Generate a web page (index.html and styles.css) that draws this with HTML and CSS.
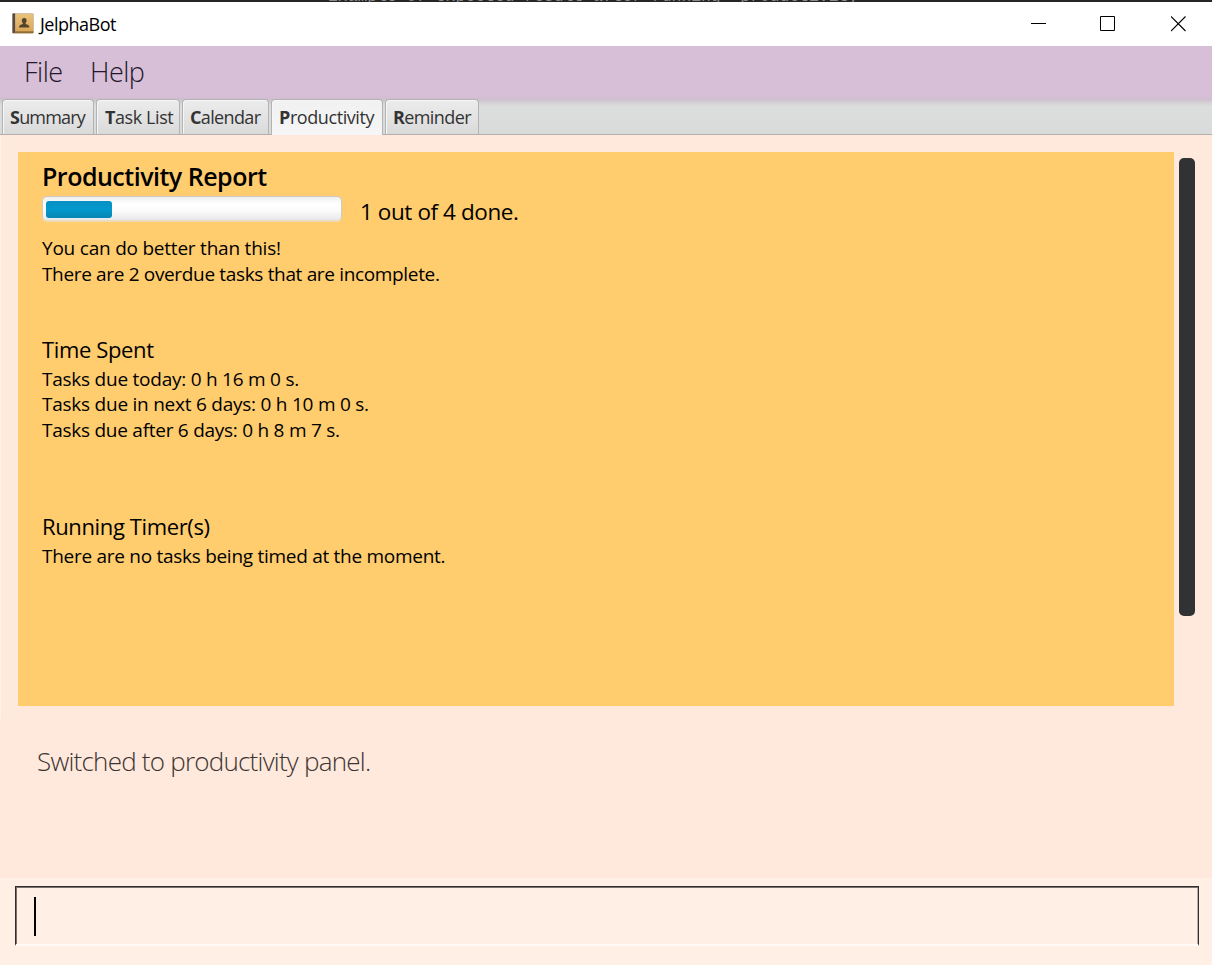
FILE: index.html
```html
<!DOCTYPE html>
<html lang="en">
<head>
<meta charset="utf-8">
<title>JelphaBot</title>
<link rel="stylesheet" href="styles.css">
</head>
<body>
<div class="window">
  <div class="backdrop"><span class="backdrop-text">Example of expected result after running `productivity`</span></div>
  <header class="titlebar">
    <svg class="app-icon" width="22" height="21" viewBox="0 0 22 21">
      <defs><linearGradient id="book" x1="0" y1="0" x2="0" y2="1"><stop offset="0" stop-color="#e8c27c"/><stop offset="1" stop-color="#dba757"/></linearGradient></defs>
      <rect x="0.5" y="0.5" width="21" height="20" rx="1" fill="#a8844f"/>
      <rect x="3" y="1" width="18" height="17.500" fill="url(#book)"/>
      <rect x="0.5" y="0.5" width="2.6" height="19.5" fill="#55494a"/>
      <rect x="2" y="18.5" width="19.5" height="1.2" fill="#86662f"/>
      <path d="M12.200 5c1.600 0 2.400 1.100 2.400 2.500 0 1.200-.5 2-1 2.500v1c1.800.7 3.800 1 3.800 3.500H7c0-2.500 2-2.800 3.800-3.500v-1c-.5-.5-1-1.300-1-2.500C9.800 6.100 10.600 5 12.200 5z" fill="#54442d"/>
    </svg>
    <span class="app-name">JelphaBot</span>
    <div class="controls">
      <svg width="16" height="16" viewBox="0 0 16 16"><path d="M0 7.500h15" stroke="#000" fill="none"/></svg>
      <svg width="16" height="16" viewBox="0 0 16 16"><path d="M.5.5h14v14H.5z" stroke="#000" fill="none"/></svg>
      <svg width="16" height="16" viewBox="0 0 16 16"><path d="M0 .5l14.500 14.500M14.500 .5L0 15" stroke="#000" stroke-width="1.100" fill="none"/></svg>
    </div>
  </header>
  <nav class="menubar"><span class="menu-file">File</span><span class="menu-help">Help</span></nav>
  <div class="tabs">
    <div class="tab tab-summary"><span><b>S</b>ummary</span></div>
    <div class="tab tab-tasks"><span><b>T</b>ask List</span></div>
    <div class="tab tab-calendar"><span><b>C</b>alendar</span></div>
    <div class="tab tab-productivity active"><span><b>P</b>roductivity</span></div>
    <div class="tab tab-reminder"><span><b>R</b>eminder</span></div>
  </div>
  <main class="content">
    <section class="report">
      <h1 class="title">Productivity Report</h1>
      <div class="progress-row">
        <div class="progress"><div class="progress-bar"></div></div>
        <span class="done">1 out of 4 done.</span>
      </div>
      <div class="summary">
        <p class="l1">You can do better than this!</p>
        <p class="l2">There are 2 overdue tasks that are incomplete.</p>
      </div>
      <h2 class="spent">Time Spent</h2>
      <div class="times">
        <p class="l3">Tasks due today: 0 h 16 m 0 s.</p>
        <p class="l4">Tasks due in next 6 days: 0 h 10 m 0 s.</p>
        <p class="l5">Tasks due after 6 days: 0 h 8 m 7 s.</p>
      </div>
      <h2 class="running">Running Timer(s)</h2>
      <p class="l6">There are no tasks being timed at the moment.</p>
    </section>
    <div class="scroll-thumb"></div>
  </main>
  <section class="result"><span class="message">Switched to productivity panel.</span></section>
  <footer class="command"><div class="command-box"><div class="caret"></div></div></footer>
</div>
</body>
</html>
```
FILE: styles.css
```css
* { box-sizing: border-box; }
body { margin: 0; font-family: "Open Sans", "Noto Sans", sans-serif; color: #000; }
h1, h2, p { margin: 0; font-weight: 400; white-space: nowrap; }
.window { width: 1212px; height: 965px; display: flex; flex-direction: column; background: #ffe8dc; overflow: hidden; }
.backdrop { height: 2px; background: #262626; overflow: hidden; display: flex; align-items: flex-end; padding-left: 328px; }
.backdrop-text { font: 16.360px/18px "Liberation Mono", monospace; color: #8c8c8c; height: 14px; white-space: nowrap; }
.titlebar { height: 44px; background: #fff; display: flex; align-items: flex-start; padding: 10px 25px 0 12px; }
.app-icon { margin-top: 1px; }
.app-name { font-size: 18px; line-height: 24px; margin-left: 6px; letter-spacing: -0.500px; }
.controls { margin: 4px 0 0 auto; display: flex; gap: 53px; }
.controls svg { display: block; }
.controls svg:last-child { margin-left: 2px; }
.menubar { height: 53px; flex: none; background: linear-gradient(#d6bfd7 95%, #cfbdd0); display: flex; padding-left: 24px; color: #24182a; font-size: 27px; font-weight: 300; line-height: 52px; letter-spacing: -0.500px; }
.menu-file { width: 66px; }
.tabs { height: 36px; flex: none; background: linear-gradient(#cdc0cd, #dcdddd 7px, #d9dbdb); border-bottom: 1px solid #b4aead; display: flex; gap: 2px; padding-left: 2px; }
.tab { height: 35px; border: 1px solid #b3b3b3; border-bottom: 0; border-radius: 4px 4px 0 0; background: linear-gradient(#ececec, #dadada); box-shadow: inset 1px 1px 0 #f6f6f6; font-size: 18px; line-height: 35px; color: #333; padding-left: 7px; white-space: nowrap; letter-spacing: -0.420px; }
.tab b { font-weight: 700; }
.tab.active { height: 36px; background: linear-gradient(#f1f1f1, #f6f6f6); }
.tab-summary { width: 92px; letter-spacing: -0.800px; }
.tab-tasks { width: 84px; padding-left: 8px; }
.tab-calendar { width: 87px; letter-spacing: -0.650px; }
.tab-productivity { width: 112px; }
.tab-reminder { width: 94px; letter-spacing: -0.600px; }
.content { height: 584px; flex: none; display: flex; padding: 17px 17px 0; gap: 5px; border-left: 1px solid #fff0ea; }
.report { width: 1156px; height: 554px; background: #ffcc6e; padding: 9px 0 0 24px; display: flex; flex-direction: column; }
.title { font-size: 25px; line-height: 30px; font-weight: 600; height: 35px; letter-spacing: -0.500px; }
.progress-row { display: flex; height: 39px; gap: 18px; }
.progress { width: 300px; height: 26px; padding: 3px; border: 1px solid #d0c8c4; border-bottom: 2px solid #ecdcb8; border-radius: 5px; background: linear-gradient(#eeeeee, #fff 30%, #fbfbfb 60%, #e8e8ec); }
.progress-bar { width: 66px; height: 17px; margin-top: 1px; border-radius: 3px; background: linear-gradient(#0790c2, #0398ce 50%, #0886b3); }
.done { font-size: 22.500px; line-height: 32px; white-space: nowrap; letter-spacing: -0.420px; }
.summary, .times, .l6 { font-size: 19px; line-height: 26px; }
.summary { height: 99px; }
.spent, .running { font-size: 22px; line-height: 30px; height: 32px; letter-spacing: -0.370px; }
.times { height: 145px; }
.l1 { letter-spacing: -0.220px; }
.l2 { letter-spacing: -0.340px; }
.l3 { letter-spacing: -0.240px; }
.l4 { margin-top: -1px; letter-spacing: -0.240px; }
.l5 { letter-spacing: -0.260px; }
.l6 { letter-spacing: -0.280px; }
.scroll-thumb { width: 16px; height: 458px; margin-top: 6px; border-radius: 5px; background: #303234; }
.result { height: 159px; flex: none; padding: 23px 0 0 37px; }
.message { font-size: 26px; line-height: 38px; font-weight: 300; color: #3b3431; display: block; letter-spacing: -0.770px; }
.command { height: 87px; flex: none; background: #ffefe5; padding: 8px 13px 0 15px; }
.command-box { height: 60px; border: 1px solid #322d2d; border-bottom: 2px solid #fffaf5; box-shadow: inset 1px 1px 0 #7a716e, inset -1px 0 0 #b9aeaa; padding: 10px 0 0 18px; }
.caret { width: 1.500px; height: 39px; background: #000; }
```
